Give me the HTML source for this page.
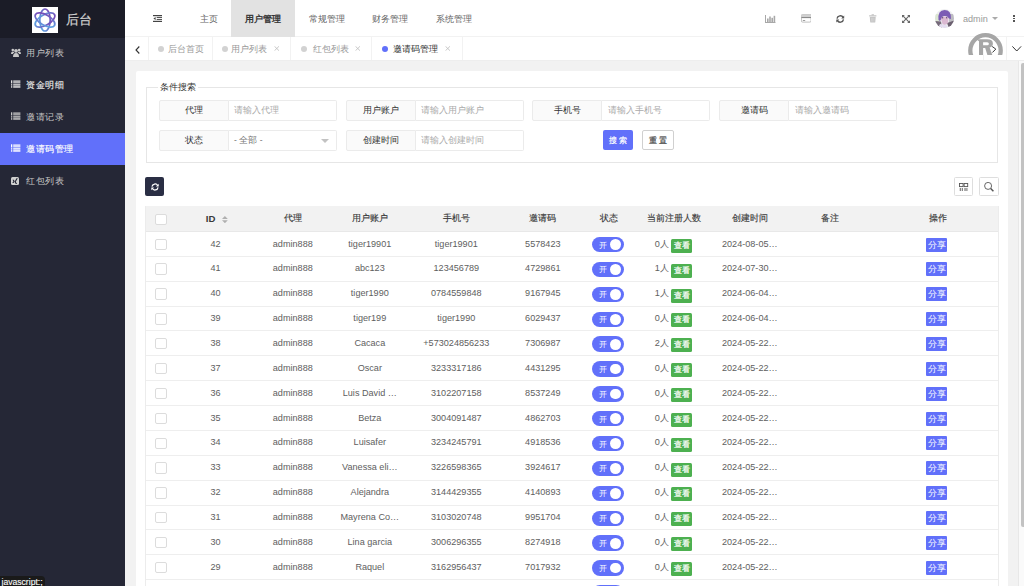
<!DOCTYPE html>
<html><head><meta charset="utf-8">
<style>
*{box-sizing:border-box;margin:0;padding:0}
html,body{width:1024px;height:586px;overflow:hidden;background:#f2f2f2;font-family:"Liberation Sans",sans-serif;color:#666}
.a{position:absolute}
#side{position:absolute;left:0;top:0;width:125px;height:586px;background:#252736}
#logo{position:absolute;left:0;top:0;width:125px;height:37.5px;background:#1b1c27}
#logo .lg{position:absolute;left:32px;top:7px;width:26px;height:26px;background:#fff}
#logo .tt{position:absolute;left:66px;top:10.5px;font-size:13px;line-height:18px;color:#d4d4d4;-webkit-text-stroke:0.2px #d4d4d4}
.mi{position:absolute;left:0;width:125px;height:32px;color:#c4c4c4;font-size:9px;line-height:32px}
.mi.on{background:#6170fa;color:#fff}
.mi svg{position:absolute;left:11px;top:11px}
.mi span{position:absolute;left:26px;top:0;letter-spacing:0.5px}
#hdr{position:absolute;left:125px;top:0;width:899px;height:37px;background:#fff;border-bottom:1px solid #f2f2f2}
.nav{position:absolute;top:0;height:37px;line-height:38px;font-size:9px;color:#666;text-align:center}
.nav.on{background:#e2e2e2;color:#333;-webkit-text-stroke:0.35px #333}
#tabs{position:absolute;left:125px;top:37px;width:899px;height:23.5px;background:#fff;border-bottom:1px solid #eee}
.tab{position:absolute;top:0;height:23px;line-height:25px;font-size:8.6px;color:#999;border-right:1px solid #f2f2f2}
.tab .dot{position:absolute;top:8.5px;width:6px;height:6px;border-radius:50%;background:#d2d2d2}
.tab .x{position:absolute}
#card{position:absolute;left:136px;top:71px;width:871.5px;height:600px;background:#fff;border-radius:2px}
#fs{position:absolute;left:145.6px;top:87.4px;width:852.7px;height:76.1px;border:1px solid #e6e6e6}
#legend{position:absolute;left:158px;top:81px;padding:0 2px;background:#fff;font-size:8.7px;line-height:13px;color:#333}
.lab{position:absolute;height:20.5px;width:70px;background:#fafafa;border:1px solid #ebebeb;border-radius:2px 0 0 2px;font-size:8.7px;line-height:18px;text-align:center;color:#333}
.inp{position:absolute;height:20.5px;width:108px;background:#fff;border:1px solid #ebebeb;border-left:none;border-radius:0 2px 2px 0;font-size:8.5px;line-height:18px;color:#aaa;padding-left:5.5px}
.btn{position:absolute;height:20.4px;font-size:7.8px;line-height:22.2px;text-align:center;-webkit-text-stroke:0.2px currentColor}
#tbl{position:absolute;left:145px;top:206px;width:854px;height:400px;border-left:1px solid #ececec;border-right:1px solid #ececec}
#thead{position:absolute;left:0;top:0;width:100%;height:26px;background:#f2f2f2;border-bottom:1px solid #e8e8e8}
.row{position:absolute;left:0;width:100%;height:24.87px;border-bottom:1px solid #eee;background:#fff}
.c{position:absolute;top:-0.5px;width:120px;text-align:center;font-size:9.1px;line-height:24px;color:#5e5e5e;white-space:nowrap}
.c.h{top:0;color:#3a3a3a;font-size:9px;-webkit-text-stroke:0.15px #3a3a3a;line-height:25px}
.cb{position:absolute;left:9.3px;top:6.6px;width:11.3px;height:11.3px;border:1px solid #dcdcdc;background:#fff;border-radius:2px}
#thead .cb{top:7.5px}
.sw{position:absolute;left:446px;top:5px;width:32px;height:15.4px;border-radius:8px;background:#6170fa}
.sw i{position:absolute;left:7px;top:0.6px;font-style:normal;font-size:8px;line-height:15px;color:#fff}
.sw b{position:absolute;left:17.8px;top:2.3px;width:10.8px;height:10.8px;border-radius:50%;background:#fff}
.gb{display:inline-block;margin-left:2px;width:21.3px;height:14px;line-height:14px;background:#4db050;color:#fff;font-size:8px;vertical-align:-1.3px;text-align:center;border-radius:1.5px;-webkit-text-stroke:0.2px #fff}
.share{position:absolute;left:780.2px;top:5.5px;width:21.2px;height:14px;background:#6170fa;color:#fff;font-size:8.5px;line-height:14.5px;text-align:center;border-radius:1px}
.sort{display:inline-block;position:relative;width:5.8px;height:7.2px;margin-left:6.5px;vertical-align:-0.5px}
.sort:before{content:"";position:absolute;left:0;top:0;border:2.9px solid transparent;border-bottom:2.9px solid #b0b0b0;border-top:none}
.sort:after{content:"";position:absolute;left:0;top:4.2px;border:2.9px solid transparent;border-top:2.9px solid #b0b0b0;border-bottom:none}
</style></head><body>
<div id="side">
  <div id="logo">
    <div class="lg"><svg width="26" height="26" viewBox="0 0 26 26"><defs><linearGradient id="g1" x1="0" y1="1" x2="1" y2="0"><stop offset="0" stop-color="#5ab0e8"/><stop offset="1" stop-color="#7a3bb0"/></linearGradient></defs><g fill="none" stroke="url(#g1)" stroke-width="1.7"><ellipse cx="13" cy="13" rx="5.2" ry="11"/><ellipse cx="13" cy="13" rx="5.2" ry="11" transform="rotate(60 13 13)"/><ellipse cx="13" cy="13" rx="5.2" ry="11" transform="rotate(-60 13 13)"/></g></svg></div>
    <div class="tt">后台</div>
  </div>
  <div class="mi" style="top:37.2px"><svg width="10" height="9" viewBox="0 0 10 9"><g fill="#c8c8c8"><circle cx="5" cy="2.8" r="1.9"/><path d="M2 9 Q2 5 5 5 Q8 5 8 9Z"/><circle cx="1.8" cy="2" r="1.3"/><circle cx="8.2" cy="2" r="1.3"/><path d="M0 6 Q0 3.6 1.8 3.6 Q3 3.6 3.3 4.4 Q2 5 1.9 6Z"/><path d="M10 6 Q10 3.6 8.2 3.6 Q7 3.6 6.7 4.4 Q8 5 8.1 6Z"/></g></svg><span>用户列表</span></div>
  <div class="mi" style="top:69.2px;color:#e8e8e8;-webkit-text-stroke:0.15px #e8e8e8"><svg width="10" height="9" viewBox="0 0 10 9"><g fill="#e0e0e0"><rect x="0" y="0.3" width="1.3" height="3.2"/><rect x="0" y="4.2" width="1.3" height="1.4"/><rect x="0" y="6.2" width="1.3" height="1.5"/><rect x="2.2" y="0.3" width="7.2" height="3.2" opacity="0.75"/><rect x="2.2" y="4.2" width="7.2" height="1.4"/><rect x="2.2" y="6.2" width="7.2" height="1.5"/></g></svg><span>资金明细</span></div>
  <div class="mi" style="top:101.2px"><svg width="10" height="9" viewBox="0 0 10 9"><g fill="#c8c8c8"><rect x="0" y="0.3" width="1.3" height="3.2"/><rect x="0" y="4.2" width="1.3" height="1.4"/><rect x="0" y="6.2" width="1.3" height="1.5"/><rect x="2.2" y="0.3" width="7.2" height="3.2" opacity="0.75"/><rect x="2.2" y="4.2" width="7.2" height="1.4"/><rect x="2.2" y="6.2" width="7.2" height="1.5"/></g></svg><span>邀请记录</span></div>
  <div class="mi on" style="top:133.2px;-webkit-text-stroke:0.15px #fff"><svg width="10" height="9" viewBox="0 0 10 9"><g fill="#fff"><rect x="0" y="0.3" width="1.3" height="3.2"/><rect x="0" y="4.2" width="1.3" height="1.4"/><rect x="0" y="6.2" width="1.3" height="1.5"/><rect x="2.2" y="0.3" width="7.2" height="3.2" opacity="0.75"/><rect x="2.2" y="4.2" width="7.2" height="1.4"/><rect x="2.2" y="6.2" width="7.2" height="1.5"/></g></svg><span>邀请码管理</span></div>
  <div class="mi" style="top:165.2px"><svg width="8" height="8" viewBox="0 0 8 8" style="top:11.5px"><rect x="0" y="0" width="8" height="8" rx="1.5" fill="#d0d0d0"/><path d="M1.5 2.7 H2.8 L3.7 4.2 L2.6 6 H1.3 L2.4 4.2Z" fill="#252736"/><path d="M5.5 1.2 H6.8 L4.8 4.8 L6.1 7.1 H4.8 L3.5 4.8Z" fill="#252736"/></svg><span>红包列表</span></div>
  <div class="a" style="left:0;top:576px;width:44.5px;height:10px;background:#1a1a1a;border-top-right-radius:4px;color:#f4f4f4;font-size:8.6px;line-height:12px;padding-left:1.5px;white-space:nowrap;-webkit-text-stroke:0.15px #fff">javascript:;</div>
</div>

<div id="hdr">
  <svg class="a" style="left:28.1px;top:15.1px" width="9.3" height="7" viewBox="0 0 9.3 7"><g fill="#444"><rect x="0" y="0" width="9.3" height="1.2"/><rect x="3.7" y="1.95" width="5.6" height="0.95"/><rect x="3.7" y="3.95" width="5.6" height="0.95"/><rect x="0" y="5.8" width="9.3" height="1.2"/><path d="M0.4 3.4 L2.6 1.9 L2.6 4.9Z"/></g></svg>
  <div class="nav" style="left:61.3px;width:44.7px">主页</div>
  <div class="nav on" style="left:106px;width:63.7px">用户管理</div>
  <div class="nav" style="left:169.7px;width:63.7px">常规管理</div>
  <div class="nav" style="left:233.4px;width:63.7px">财务管理</div>
  <div class="nav" style="left:297.1px;width:63.7px">系统管理</div>
  <!-- right icons -->
  <svg class="a" style="left:640px;top:14.5px" width="11" height="8" viewBox="0 0 11 8"><g fill="#a8a8a8"><rect x="0" y="0" width="1" height="8"/><rect x="0" y="7" width="10.5" height="1"/><rect x="2" y="3.5" width="1.6" height="3.5"/><rect x="4.2" y="1.5" width="1.6" height="5.5"/><rect x="6.4" y="2.8" width="1.6" height="4.2"/><rect x="8.6" y="0.8" width="1.6" height="6.2"/></g></svg>
  <svg class="a" style="left:675.5px;top:14.3px" width="10.5" height="8.5" viewBox="0 0 10.5 8.5"><rect x="0.4" y="0.4" width="9.7" height="7.7" rx="1.2" fill="#fff" stroke="#b0b0b0" stroke-width="0.8"/><rect x="0.4" y="0.4" width="9.7" height="2.6" rx="1" fill="#d0d0d0"/><rect x="0.4" y="3" width="9.7" height="1.1" fill="#8a8a8a"/><rect x="1.8" y="6" width="2.4" height="0.8" fill="#888"/></svg>
  <svg class="a" style="left:711px;top:14.5px" width="8.5" height="8" viewBox="0 0 8.5 8"><g fill="none" stroke="#555" stroke-width="1.4"><path d="M1 3.6 A3.3 3.3 0 0 1 7.2 2.6"/><path d="M7.5 4.4 A3.3 3.3 0 0 1 1.3 5.4"/></g><g fill="#555"><path d="M8.2 0.6 L8.2 3.6 L5.2 3.6Z"/><path d="M0.3 7.4 L0.3 4.4 L3.3 4.4Z"/></g></svg>
  <svg class="a" style="left:744.3px;top:14.3px" width="7.5" height="8.5" viewBox="0 0 7.5 8.5"><g fill="#c4c4c4"><rect x="0" y="1.3" width="7.5" height="1.1" rx="0.4"/><rect x="2.5" y="0.2" width="2.5" height="1.3" rx="0.4"/><path d="M0.8 2.9 H6.7 L6.3 8 Q6.2 8.5 5.7 8.5 H1.8 Q1.3 8.5 1.2 8Z"/></g><g stroke="#e4e4e4" stroke-width="0.4"><path d="M2.6 3.8 V7.6 M3.75 3.8 V7.6 M4.9 3.8 V7.6"/></g></svg>
  <svg class="a" style="left:777px;top:14.6px" width="8" height="8" viewBox="0 0 8 8"><path d="M1.2 1.2 L6.8 6.8 M6.8 1.2 L1.2 6.8" stroke="#666" stroke-width="1.1"/><g fill="#666"><path d="M0 0 H2.8 L0 2.8Z"/><path d="M8 0 H5.2 L8 2.8Z"/><path d="M0 8 H2.8 L0 5.2Z"/><path d="M8 8 H5.2 L8 5.2Z"/></g></svg>
  <svg class="a" style="left:809.9px;top:9.2px" width="19" height="19" viewBox="0 0 19 19"><defs><clipPath id="av"><circle cx="9.5" cy="9.5" r="9.5"/></clipPath></defs><g clip-path="url(#av)"><rect width="19" height="19" fill="#eeeef0"/><rect x="0" y="5" width="5" height="8" fill="#dbe6d3"/><rect x="14" y="5" width="5" height="8" fill="#bdbcc2"/><path d="M0 12 L6 12.5 L7 19 L0 19Z" fill="#766a7a"/><path d="M12 14 L19 11.5 L19 19 L14 19Z" fill="#6c6070"/><path d="M3 19 L5 15 L11 16 L14 19Z" fill="#e4ddf0"/><path d="M5.5 8.5 Q9.5 6.5 13.5 8.5 L13 14 Q10.5 17 7.5 15 Z" fill="#dbb9d2"/><path d="M3.5 11 Q2.5 1 9.5 1 Q16.5 1 16 10 L14 9.5 Q12.5 6.5 9.5 7 Q6.5 7 6 10.5 L5 12Z" fill="#7c5cb4"/><rect x="7" y="8.3" width="1.2" height="1" fill="#4a3a5a"/><rect x="11" y="8.3" width="1.2" height="1" fill="#4a3a5a"/></g></svg>
  <div class="a" style="left:838px;top:11.8px;font-size:9.1px;line-height:15px;color:#999">admin</div>
  <div class="a" style="left:866.5px;top:16.8px;width:0;height:0;border-left:3.4px solid transparent;border-right:3.4px solid transparent;border-top:3.2px solid #aaa"></div>
  <div class="a" style="left:888px;top:14.7px;width:1.6px;height:7px;background:repeating-linear-gradient(#555 0 1.6px,transparent 1.6px 2.7px)"></div>
</div>

<div id="tabs">
  <div class="tab" style="left:0;width:24px;color:#333"><svg class="a" style="left:9.5px;top:8.5px" width="5" height="8" viewBox="0 0 5 8"><path d="M4.3 0.5 L1 4 L4.3 7.5" fill="none" stroke="#333" stroke-width="1.1"/></svg></div>
  <div class="tab" style="left:24px;width:63.6px"><span class="dot" style="left:9.3px"></span><span class="a" style="left:18.5px">后台首页</span></div>
  <div class="tab" style="left:87.6px;width:78.2px"><span class="dot" style="left:9px"></span><span class="a" style="left:18.5px">用户列表</span><svg class="x" style="left:61.3px;top:9.2px" width="5.5" height="5" viewBox="0 0 5.5 5"><path d="M0.5 0.3 L5 4.7 M5 0.3 L0.5 4.7" stroke="#bbb" stroke-width="0.8"/></svg></div>
  <div class="tab" style="left:165.8px;width:81.2px"><span class="dot" style="left:10px"></span><span class="a" style="left:22px">红包列表</span><svg class="x" style="left:63.8px;top:9.2px" width="5.5" height="5" viewBox="0 0 5.5 5"><path d="M0.5 0.3 L5 4.7 M5 0.3 L0.5 4.7" stroke="#bbb" stroke-width="0.8"/></svg></div>
  <div class="tab" style="left:247px;width:91px;color:#333"><span class="dot" style="left:9.7px;background:#6170fa"></span><span class="a" style="left:20.7px">邀请码管理</span><svg class="x" style="left:73.2px;top:9.2px" width="5.5" height="5" viewBox="0 0 5.5 5"><path d="M0.5 0.3 L5 4.7 M5 0.3 L0.5 4.7" stroke="#bbb" stroke-width="0.8"/></svg></div>
  <div class="tab" style="left:857.7px;width:23px;border-left:1px solid #f2f2f2;border-right:none"></div>
  <div class="tab" style="left:880.6px;width:18.4px;border-left:1px solid #f2f2f2;border-right:none"><svg class="a" style="left:5.8px;top:9.2px" width="9.5" height="5.5" viewBox="0 0 9.5 5.5"><path d="M0.4 0.4 L4.75 5 L9.1 0.4" fill="none" stroke="#333" stroke-width="1"/></svg></div>
</div>

<svg class="a" style="left:964px;top:30px" width="44" height="25" viewBox="0 0 44 25"><circle cx="21.5" cy="20.4" r="15.2" fill="#fff" stroke="#a6a6a6" stroke-width="4.3"/><path d="M13.1 9.3 H23 Q28.9 9.3 28.9 13.5 Q28.9 16.8 25.6 17.6 L28.3 25 H23.4 L21.2 17.9 H19.1 V25 H15 V11.2 Q13.8 11 13.1 9.3Z M19.1 12.2 V15.3 H23.2 Q24.9 15.3 24.9 13.75 Q24.9 12.2 23.2 12.2Z" fill="#a6a6a6"/><path d="M28.2 16.5 L31.8 19.1 L28.4 22.5" fill="none" stroke="#333" stroke-width="1"/></svg>
<!-- scrollbar -->
<div class="a" style="left:1018.3px;top:60.5px;width:5.7px;height:526px;background:#fafafa;border-left:1px solid #e8e8e8"></div>
<div class="a" style="left:1020.5px;top:62.9px;width:3.5px;height:464.5px;background:#c2c2c2;border-radius:2px 0 0 2px"></div>

<div id="card"></div>
<div id="fs"></div>
<div id="legend">条件搜索</div>
<!-- row1 -->
<div class="lab" style="left:158.9px;top:100px">代理</div><div class="inp" style="left:228.6px;top:100px">请输入代理</div>
<div class="lab" style="left:345.6px;top:100px">用户账户</div><div class="inp" style="left:415.6px;top:100px">请输入用户账户</div>
<div class="lab" style="left:532.3px;top:100px">手机号</div><div class="inp" style="left:602.3px;top:100px">请输入手机号</div>
<div class="lab" style="left:719.3px;top:100px">邀请码</div><div class="inp" style="left:789.3px;top:100px">请输入邀请码</div>
<!-- row2 -->
<div class="lab" style="left:158.9px;top:130.4px">状态</div><div class="inp" style="left:228.6px;top:130.4px;color:#777">- 全部 -<span class="a" style="left:92px;top:7.5px;width:0;height:0;border-left:4px solid transparent;border-right:4px solid transparent;border-top:4px solid #c2c2c2"></span></div>
<div class="lab" style="left:345.6px;top:130.4px">创建时间</div><div class="inp" style="left:415.6px;top:130.4px">请输入创建时间</div>
<div class="btn" style="left:602.7px;top:130px;width:30.5px;background:#6170fa;color:#fff;border-radius:2px">搜&nbsp;索</div>
<div class="btn" style="left:642px;top:130px;width:31.5px;background:#fff;color:#444;border:1px solid #d0d0d0;line-height:20.2px;border-radius:2px">重&nbsp;置</div>

<!-- toolbar -->
<div class="a" style="left:145.3px;top:177.1px;width:19px;height:19px;background:#2a2e44;border-radius:2px"><svg class="a" style="left:5.5px;top:5.5px" width="8" height="8" viewBox="0 0 8.5 8"><g fill="none" stroke="#fff" stroke-width="1.3"><path d="M1 3.6 A3.3 3.3 0 0 1 7.2 2.6"/><path d="M7.5 4.4 A3.3 3.3 0 0 1 1.3 5.4"/></g><g fill="#fff"><path d="M8.2 0.6 L8.2 3.6 L5.2 3.6Z"/><path d="M0.3 7.4 L0.3 4.4 L3.3 4.4Z"/></g></svg></div>
<div class="a" style="left:954.1px;top:177.2px;width:19px;height:19px;border:1px solid #dedede;border-radius:1.5px"><svg class="a" style="left:4px;top:4.8px" width="9.5" height="8.5" viewBox="0 0 9.5 8.5"><g fill="none" stroke="#555" stroke-width="0.9"><rect x="0.5" y="0.5" width="3.6" height="3.1"/><rect x="5.1" y="0.5" width="3.6" height="3.1"/></g><g fill="#555"><rect x="0.8" y="5" width="0.9" height="3.2"/><rect x="2.8" y="5" width="0.9" height="3.2"/></g><rect x="5.1" y="5" width="3.6" height="3.2" fill="#a8a8a8"/></svg></div>
<div class="a" style="left:979.2px;top:177.2px;width:19.6px;height:19px;border:1px solid #dedede;border-radius:1.5px"><svg class="a" style="left:3.6px;top:4.2px" width="11" height="10.5" viewBox="0 0 11 10.5"><circle cx="4.1" cy="3.9" r="3.5" fill="none" stroke="#555" stroke-width="0.9"/><path d="M6.7 6.5 L9.4 9.2" stroke="#555" stroke-width="1.5"/></svg></div>

<div id="tbl">
  <div id="thead"><span class="cb"></span><div class="c h" style="left:10.8px"><b style="font-weight:bold;font-size:9.6px;-webkit-text-stroke:0">ID</b><svg width="5.8" height="7.2" viewBox="0 0 5.8 7.2" style="margin-left:6.5px;vertical-align:-1.1px"><path d="M0 2.9 L2.9 0 L5.8 2.9Z M0 4.3 H5.8 L2.9 7.2Z" fill="#b0b0b0"/></svg></div><div class="c h" style="left:86.8px">代理</div><div class="c h" style="left:163.8px">用户账户</div><div class="c h" style="left:250.3px">手机号</div><div class="c h" style="left:336.8px">邀请码</div><div class="c h" style="left:403.2px">状态</div><div class="c h" style="left:467.5px">当前注册人数</div><div class="c h" style="left:543.8px">创建时间</div><div class="c h" style="left:623.7px">备注</div><div class="c h" style="left:732.0px">操作</div></div>
<div class="row" style="top:26.00px"><span class="cb"></span><div class="c" style="left:9.5px">42</div><div class="c" style="left:86.8px">admin888</div><div class="c" style="left:163.8px">tiger19901</div><div class="c" style="left:250.3px">tiger19901</div><div class="c" style="left:336.8px">5578423</div><span class="sw"><i>开</i><b></b></span><div class="c cnt" style="left:467.5px">0人<span class="gb">查看</span></div><div class="c" style="left:543.8px">2024-08-05…</div><span class="share">分享</span></div>
<div class="row" style="top:50.87px"><span class="cb"></span><div class="c" style="left:9.5px">41</div><div class="c" style="left:86.8px">admin888</div><div class="c" style="left:163.8px">abc123</div><div class="c" style="left:250.3px">123456789</div><div class="c" style="left:336.8px">4729861</div><span class="sw"><i>开</i><b></b></span><div class="c cnt" style="left:467.5px">1人<span class="gb">查看</span></div><div class="c" style="left:543.8px">2024-07-30…</div><span class="share">分享</span></div>
<div class="row" style="top:75.74px"><span class="cb"></span><div class="c" style="left:9.5px">40</div><div class="c" style="left:86.8px">admin888</div><div class="c" style="left:163.8px">tiger1990</div><div class="c" style="left:250.3px">0784559848</div><div class="c" style="left:336.8px">9167945</div><span class="sw"><i>开</i><b></b></span><div class="c cnt" style="left:467.5px">1人<span class="gb">查看</span></div><div class="c" style="left:543.8px">2024-06-04…</div><span class="share">分享</span></div>
<div class="row" style="top:100.61px"><span class="cb"></span><div class="c" style="left:9.5px">39</div><div class="c" style="left:86.8px">admin888</div><div class="c" style="left:163.8px">tiger199</div><div class="c" style="left:250.3px">tiger1990</div><div class="c" style="left:336.8px">6029437</div><span class="sw"><i>开</i><b></b></span><div class="c cnt" style="left:467.5px">0人<span class="gb">查看</span></div><div class="c" style="left:543.8px">2024-06-04…</div><span class="share">分享</span></div>
<div class="row" style="top:125.48px"><span class="cb"></span><div class="c" style="left:9.5px">38</div><div class="c" style="left:86.8px">admin888</div><div class="c" style="left:163.8px">Cacaca</div><div class="c" style="left:250.3px">+573024856233</div><div class="c" style="left:336.8px">7306987</div><span class="sw"><i>开</i><b></b></span><div class="c cnt" style="left:467.5px">2人<span class="gb">查看</span></div><div class="c" style="left:543.8px">2024-05-22…</div><span class="share">分享</span></div>
<div class="row" style="top:150.35px"><span class="cb"></span><div class="c" style="left:9.5px">37</div><div class="c" style="left:86.8px">admin888</div><div class="c" style="left:163.8px">Oscar</div><div class="c" style="left:250.3px">3233317186</div><div class="c" style="left:336.8px">4431295</div><span class="sw"><i>开</i><b></b></span><div class="c cnt" style="left:467.5px">0人<span class="gb">查看</span></div><div class="c" style="left:543.8px">2024-05-22…</div><span class="share">分享</span></div>
<div class="row" style="top:175.22px"><span class="cb"></span><div class="c" style="left:9.5px">36</div><div class="c" style="left:86.8px">admin888</div><div class="c" style="left:163.8px">Luis David …</div><div class="c" style="left:250.3px">3102207158</div><div class="c" style="left:336.8px">8537249</div><span class="sw"><i>开</i><b></b></span><div class="c cnt" style="left:467.5px">0人<span class="gb">查看</span></div><div class="c" style="left:543.8px">2024-05-22…</div><span class="share">分享</span></div>
<div class="row" style="top:200.09px"><span class="cb"></span><div class="c" style="left:9.5px">35</div><div class="c" style="left:86.8px">admin888</div><div class="c" style="left:163.8px">Betza</div><div class="c" style="left:250.3px">3004091487</div><div class="c" style="left:336.8px">4862703</div><span class="sw"><i>开</i><b></b></span><div class="c cnt" style="left:467.5px">0人<span class="gb">查看</span></div><div class="c" style="left:543.8px">2024-05-22…</div><span class="share">分享</span></div>
<div class="row" style="top:224.96px"><span class="cb"></span><div class="c" style="left:9.5px">34</div><div class="c" style="left:86.8px">admin888</div><div class="c" style="left:163.8px">Luisafer</div><div class="c" style="left:250.3px">3234245791</div><div class="c" style="left:336.8px">4918536</div><span class="sw"><i>开</i><b></b></span><div class="c cnt" style="left:467.5px">0人<span class="gb">查看</span></div><div class="c" style="left:543.8px">2024-05-22…</div><span class="share">分享</span></div>
<div class="row" style="top:249.83px"><span class="cb"></span><div class="c" style="left:9.5px">33</div><div class="c" style="left:86.8px">admin888</div><div class="c" style="left:163.8px">Vanessa eli…</div><div class="c" style="left:250.3px">3226598365</div><div class="c" style="left:336.8px">3924617</div><span class="sw"><i>开</i><b></b></span><div class="c cnt" style="left:467.5px">0人<span class="gb">查看</span></div><div class="c" style="left:543.8px">2024-05-22…</div><span class="share">分享</span></div>
<div class="row" style="top:274.70px"><span class="cb"></span><div class="c" style="left:9.5px">32</div><div class="c" style="left:86.8px">admin888</div><div class="c" style="left:163.8px">Alejandra</div><div class="c" style="left:250.3px">3144429355</div><div class="c" style="left:336.8px">4140893</div><span class="sw"><i>开</i><b></b></span><div class="c cnt" style="left:467.5px">0人<span class="gb">查看</span></div><div class="c" style="left:543.8px">2024-05-22…</div><span class="share">分享</span></div>
<div class="row" style="top:299.57px"><span class="cb"></span><div class="c" style="left:9.5px">31</div><div class="c" style="left:86.8px">admin888</div><div class="c" style="left:163.8px">Mayrena Co…</div><div class="c" style="left:250.3px">3103020748</div><div class="c" style="left:336.8px">9951704</div><span class="sw"><i>开</i><b></b></span><div class="c cnt" style="left:467.5px">0人<span class="gb">查看</span></div><div class="c" style="left:543.8px">2024-05-22…</div><span class="share">分享</span></div>
<div class="row" style="top:324.44px"><span class="cb"></span><div class="c" style="left:9.5px">30</div><div class="c" style="left:86.8px">admin888</div><div class="c" style="left:163.8px">Lina garcia</div><div class="c" style="left:250.3px">3006296355</div><div class="c" style="left:336.8px">8274918</div><span class="sw"><i>开</i><b></b></span><div class="c cnt" style="left:467.5px">0人<span class="gb">查看</span></div><div class="c" style="left:543.8px">2024-05-22…</div><span class="share">分享</span></div>
<div class="row" style="top:349.31px"><span class="cb"></span><div class="c" style="left:9.5px">29</div><div class="c" style="left:86.8px">admin888</div><div class="c" style="left:163.8px">Raquel</div><div class="c" style="left:250.3px">3162956437</div><div class="c" style="left:336.8px">7017932</div><span class="sw"><i>开</i><b></b></span><div class="c cnt" style="left:467.5px">0人<span class="gb">查看</span></div><div class="c" style="left:543.8px">2024-05-22…</div><span class="share">分享</span></div>
<div class="row" style="top:374.18px"><span class="cb"></span><div class="c" style="left:9.5px">28</div><div class="c" style="left:86.8px">admin888</div><div class="c" style="left:163.8px"></div><div class="c" style="left:250.3px"></div><div class="c" style="left:336.8px"></div><span class="sw"><i>开</i><b></b></span><div class="c cnt" style="left:467.5px">0人<span class="gb">查看</span></div><div class="c" style="left:543.8px">2024-05-22…</div><span class="share">分享</span></div>
</div>
</body></html>
